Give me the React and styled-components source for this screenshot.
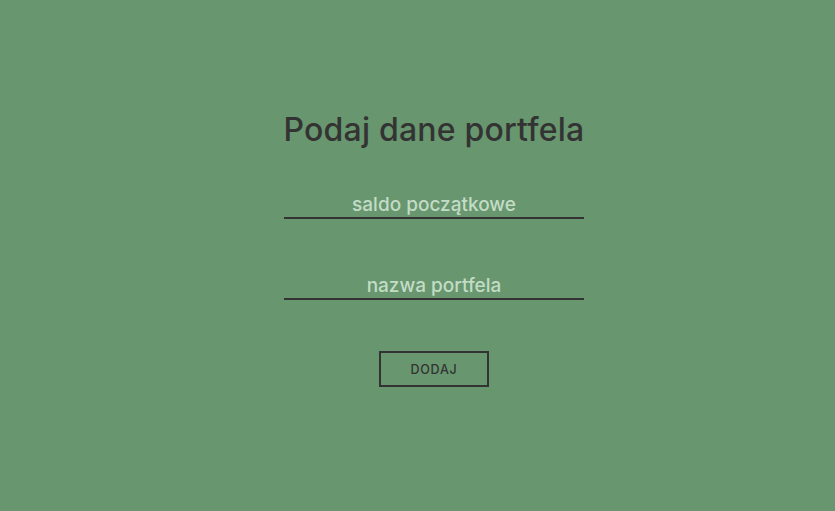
import styled, { createGlobalStyle } from 'styled-components';

const Global = createGlobalStyle`
  html, body {
    margin: 0;
    padding: 0;
    background: #68966e;
    font-family: Inter, "Open Sans", sans-serif;
  }
`

const Page = styled.div`
  min-height: 511px;
  display: flex;
  flex-direction: column;
  align-items: center;
  padding: 108px 0 0 33px;
  box-sizing: border-box;
`

const Title = styled.h1`
  margin: 0 0 37px;
  font-size: 32px;
  font-weight: 500;
  letter-spacing: 0.2px;
  color: #333333;
  line-height: 44px;
`

const Form = styled.form`
  display: flex;
  flex-direction: column;
  align-items: center;
`

const Field = styled.input`
  width: 300px;
  height: 30px;
  box-sizing: border-box;
  margin-bottom: ${p => p.$gap}px;
  padding: 2px 0 0;
  background: transparent;
  border: none;
  border-bottom: 2px solid #333333;
  outline: none;
  text-align: center;
  font-family: inherit;
  font-size: 19px;
  font-weight: 500;
  color: #333333;

  &::placeholder {
    color: #c3dcc6;
  }
`

const Button = styled.button`
  width: 110px;
  height: 36px;
  background: transparent;
  border: 2px solid #333333;
  font-family: inherit;
  font-size: 12.5px;
  font-weight: 500;
  letter-spacing: 0.8px;
  color: #333333;
  cursor: pointer;
`

const App = () => {
  return <Page>
    <Global />
    <Title>Podaj dane portfela</Title>
    <Form onSubmit={e => e.preventDefault()}>
      <Field $gap={51} placeholder="saldo początkowe" />
      <Field $gap={51} placeholder="nazwa portfela" />
      <Button type="submit">DODAJ</Button>
    </Form>
  </Page>;
};

export default App;
